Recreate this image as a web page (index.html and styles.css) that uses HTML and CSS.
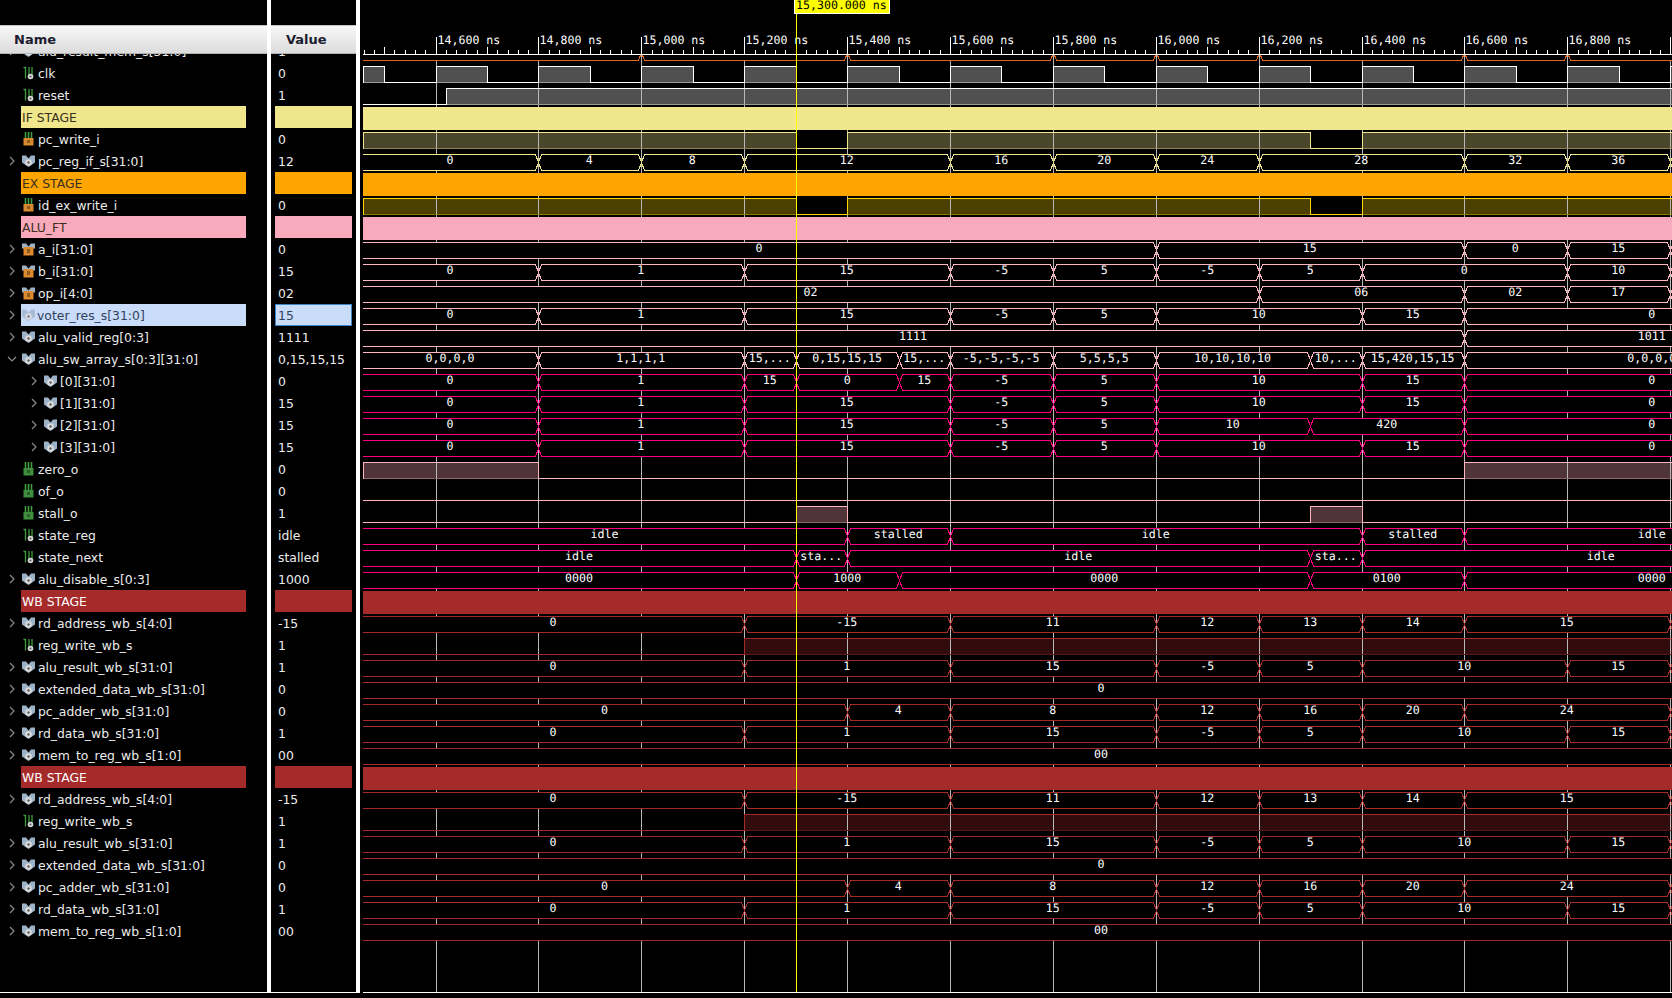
FILE: index.html
```html
<!DOCTYPE html>
<html lang="en">
<head>
    <meta charset="UTF-8" />
    <title>Waveform</title>
    <link rel="stylesheet" href="styles.css">
</head>
<body>
    <!-- icon set for the signal tree -->
    <svg class="icon-defs" width="0" height="0">
        <symbol id="ic-right" viewBox="0 0 6 10"><path d="M1 1l4 4-4 4" fill="none" stroke="#8a8a8a" stroke-width="1.2"/></symbol>
        <symbol id="ic-down" viewBox="0 0 10 6"><path d="M1 1l4 4 4-4" fill="none" stroke="#8a8a8a" stroke-width="1.2"/></symbol>
        <symbol id="ic-bit" viewBox="0 0 12 14">
            <path d="M1 1.5h2v11M6.5 1v8M9.5 1v8" fill="none" stroke="#3f9e3f" stroke-width="1.3"/>
            <circle cx="8" cy="10.5" r="2.8" fill="#d6d6d6"/><circle cx="8" cy="10.5" r="1" fill="#555"/>
        </symbol>
        <symbol id="ic-bit-in" viewBox="0 0 12 14">
            <path d="M3 0v7M6 0v7M9 0v7" fill="none" stroke="#3f9e3f" stroke-width="1.6"/>
            <rect x="1" y="6" width="10" height="7.5" fill="#d98a30"/><rect x="4.5" y="8" width="3" height="3" fill="#8a5c20"/>
        </symbol>
        <symbol id="ic-bit-out" viewBox="0 0 12 14">
            <path d="M3 0v7M6 0v7M9 0v7" fill="none" stroke="#3f9e3f" stroke-width="1.6"/>
            <rect x="1" y="6" width="10" height="7.5" fill="#3f8f3f"/><rect x="4.5" y="8" width="3" height="3" fill="#2a5f2a"/>
        </symbol>
        <symbol id="ic-bus" viewBox="0 0 13 14">
            <path d="M0 1.5h4l2.5 3 2.5-3h4v7l-6.5 4.5L0 8.500z" fill="#9db2c6"/>
            <circle cx="6.500" cy="8.500" r="3.300" fill="#dcdcdc"/><circle cx="6.500" cy="8.500" r="1.200" fill="#5a5a5a"/>
        </symbol>
        <symbol id="ic-bus-in" viewBox="0 0 13 14">
            <path d="M0 1.5h4l2.5 3 2.5-3h4v5H0z" fill="#9db2c6"/>
            <rect x="1.500" y="5" width="10" height="8.500" fill="#dd8a2e"/><rect x="5" y="7" width="3" height="4" fill="#8a5c20"/>
        </symbol>
    </svg>

    <div class="viewer">
        <div class="col col-name">
            <div class="col-head col-head-name">Name</div>
            <div class="rows rows-scrolled">
                <div class="row"><svg class="chev"><use href="#ic-right"/></svg><svg class="icon"><use href="#ic-bus"/></svg>alu_result_mem_s[31:0]</div>
                <div class="row no-chev"><svg class="icon"><use href="#ic-bit"/></svg>clk</div>
                <div class="row no-chev"><svg class="icon"><use href="#ic-bit"/></svg>reset</div>
                <div class="band-name band-if">IF STAGE</div>
                <div class="row no-chev"><svg class="icon"><use href="#ic-bit-in"/></svg>pc_write_i</div>
                <div class="row"><svg class="chev"><use href="#ic-right"/></svg><svg class="icon"><use href="#ic-bus"/></svg>pc_reg_if_s[31:0]</div>
                <div class="band-name band-ex">EX STAGE</div>
                <div class="row no-chev"><svg class="icon"><use href="#ic-bit-in"/></svg>id_ex_write_i</div>
                <div class="band-name band-alu">ALU_FT</div>
                <div class="row"><svg class="chev"><use href="#ic-right"/></svg><svg class="icon"><use href="#ic-bus-in"/></svg>a_i[31:0]</div>
                <div class="row"><svg class="chev"><use href="#ic-right"/></svg><svg class="icon"><use href="#ic-bus-in"/></svg>b_i[31:0]</div>
                <div class="row"><svg class="chev"><use href="#ic-right"/></svg><svg class="icon"><use href="#ic-bus-in"/></svg>op_i[4:0]</div>
                <div class="row row-selected"><svg class="chev"><use href="#ic-right"/></svg><span class="sel-fill"><svg class="icon"><use href="#ic-bus"/></svg>voter_res_s[31:0]</span></div>
                <div class="row"><svg class="chev"><use href="#ic-right"/></svg><svg class="icon"><use href="#ic-bus"/></svg>alu_valid_reg[0:3]</div>
                <div class="row"><svg class="chev chev-down"><use href="#ic-down"/></svg><svg class="icon"><use href="#ic-bus"/></svg>alu_sw_array_s[0:3][31:0]</div>
                <div class="row child"><svg class="chev"><use href="#ic-right"/></svg><svg class="icon"><use href="#ic-bus"/></svg>[0][31:0]</div>
                <div class="row child"><svg class="chev"><use href="#ic-right"/></svg><svg class="icon"><use href="#ic-bus"/></svg>[1][31:0]</div>
                <div class="row child"><svg class="chev"><use href="#ic-right"/></svg><svg class="icon"><use href="#ic-bus"/></svg>[2][31:0]</div>
                <div class="row child"><svg class="chev"><use href="#ic-right"/></svg><svg class="icon"><use href="#ic-bus"/></svg>[3][31:0]</div>
                <div class="row no-chev"><svg class="icon"><use href="#ic-bit-out"/></svg>zero_o</div>
                <div class="row no-chev"><svg class="icon"><use href="#ic-bit-out"/></svg>of_o</div>
                <div class="row no-chev"><svg class="icon"><use href="#ic-bit-out"/></svg>stall_o</div>
                <div class="row no-chev"><svg class="icon"><use href="#ic-bit"/></svg>state_reg</div>
                <div class="row no-chev"><svg class="icon"><use href="#ic-bit"/></svg>state_next</div>
                <div class="row"><svg class="chev"><use href="#ic-right"/></svg><svg class="icon"><use href="#ic-bus"/></svg>alu_disable_s[0:3]</div>
                <div class="band-name band-wb">WB STAGE</div>
                <div class="row"><svg class="chev"><use href="#ic-right"/></svg><svg class="icon"><use href="#ic-bus"/></svg>rd_address_wb_s[4:0]</div>
                <div class="row no-chev"><svg class="icon"><use href="#ic-bit"/></svg>reg_write_wb_s</div>
                <div class="row"><svg class="chev"><use href="#ic-right"/></svg><svg class="icon"><use href="#ic-bus"/></svg>alu_result_wb_s[31:0]</div>
                <div class="row"><svg class="chev"><use href="#ic-right"/></svg><svg class="icon"><use href="#ic-bus"/></svg>extended_data_wb_s[31:0]</div>
                <div class="row"><svg class="chev"><use href="#ic-right"/></svg><svg class="icon"><use href="#ic-bus"/></svg>pc_adder_wb_s[31:0]</div>
                <div class="row"><svg class="chev"><use href="#ic-right"/></svg><svg class="icon"><use href="#ic-bus"/></svg>rd_data_wb_s[31:0]</div>
                <div class="row"><svg class="chev"><use href="#ic-right"/></svg><svg class="icon"><use href="#ic-bus"/></svg>mem_to_reg_wb_s[1:0]</div>
                <div class="band-name band-wb">WB STAGE</div>
                <div class="row"><svg class="chev"><use href="#ic-right"/></svg><svg class="icon"><use href="#ic-bus"/></svg>rd_address_wb_s[4:0]</div>
                <div class="row no-chev"><svg class="icon"><use href="#ic-bit"/></svg>reg_write_wb_s</div>
                <div class="row"><svg class="chev"><use href="#ic-right"/></svg><svg class="icon"><use href="#ic-bus"/></svg>alu_result_wb_s[31:0]</div>
                <div class="row"><svg class="chev"><use href="#ic-right"/></svg><svg class="icon"><use href="#ic-bus"/></svg>extended_data_wb_s[31:0]</div>
                <div class="row"><svg class="chev"><use href="#ic-right"/></svg><svg class="icon"><use href="#ic-bus"/></svg>pc_adder_wb_s[31:0]</div>
                <div class="row"><svg class="chev"><use href="#ic-right"/></svg><svg class="icon"><use href="#ic-bus"/></svg>rd_data_wb_s[31:0]</div>
                <div class="row"><svg class="chev"><use href="#ic-right"/></svg><svg class="icon"><use href="#ic-bus"/></svg>mem_to_reg_wb_s[1:0]</div>
            </div>
        </div>

        <div class="col col-value">
            <div class="col-head col-head-value">Value</div>
            <div class="rows rows-scrolled">
                <div class="val">1</div>
                <div class="val">0</div>
                <div class="val">1</div>
                <div class="band-val band-if"></div>
                <div class="val">0</div>
                <div class="val">12</div>
                <div class="band-val band-ex"></div>
                <div class="val">0</div>
                <div class="band-val band-alu"></div>
                <div class="val">0</div>
                <div class="val">15</div>
                <div class="val">02</div>
                <div class="val val-selected">15</div>
                <div class="val">1111</div>
                <div class="val">0,15,15,15</div>
                <div class="val">0</div>
                <div class="val">15</div>
                <div class="val">15</div>
                <div class="val">15</div>
                <div class="val">0</div>
                <div class="val">0</div>
                <div class="val">1</div>
                <div class="val">idle</div>
                <div class="val">stalled</div>
                <div class="val">1000</div>
                <div class="band-val band-wb"></div>
                <div class="val">-15</div>
                <div class="val">1</div>
                <div class="val">1</div>
                <div class="val">0</div>
                <div class="val">0</div>
                <div class="val">1</div>
                <div class="val">00</div>
                <div class="band-val band-wb"></div>
                <div class="val">-15</div>
                <div class="val">1</div>
                <div class="val">1</div>
                <div class="val">0</div>
                <div class="val">0</div>
                <div class="val">1</div>
                <div class="val">00</div>
            </div>
        </div>

        <div class="col-wave">
            <svg id="waves" class="waves" width="1312" height="998" viewBox="360 0 1312 998"></svg>
        </div>
    </div>

    <script src="waves.js"></script>
</body>
</html>
```

FILE: styles.css
```css
/* Basic Styles */
body {
    margin: 0;
    background: #000;
    color: #ececec;
    font-family: "DejaVu Sans", sans-serif;
    font-size: 12.4px;
    overflow: hidden;
}

.icon-defs {
    display: block;
    height: 0;
}

.viewer {
    display: flex;
    width: 1672px;
    height: 998px;
    overflow: hidden;
    background: #000;
}

.col {
    display: flex;
    flex-direction: column;
    padding-top: 25px;
    height: 968px;
    border-right: 4px solid #fff;
}

.col-name {
    width: 267px;
    border-top: 0;
}

.col-value {
    width: 85px;
    position: relative;
}

/* second divider runs to the top of the window */
.col-value::after {
    content: "";
    position: absolute;
    top: 0;
    right: -4px;
    width: 4px;
    height: 25px;
    background: #fff;
}

.col-head {
    box-sizing: border-box;
    height: 29px;
    flex: none;
    border-top: 1px solid #c4c4c4;
    border-bottom: 1px solid #b4b4b4;
    background: linear-gradient(#f7f7f7, #dcdcdc);
    color: #1c1c30;
    font-weight: bold;
    font-size: 13px;
    line-height: 28px;
}

.col-head-name {
    padding-left: 14px;
}

.col-head-value {
    padding-left: 15px;
}

.rows {
    height: 938px;
    flex: none;
    overflow: hidden;
    border-bottom: 1px solid #fff;
}

/* the list is scrolled a little, first row sits half under the header */
.rows-scrolled > :first-child {
    margin-top: -14px;
}

.row {
    display: flex;
    align-items: center;
    height: 22px;
    padding-left: 9px;
    white-space: nowrap;
}

.row.no-chev {
    padding-left: 22px;
}

.row.child {
    padding-left: 31px;
}

.chev {
    width: 6px;
    height: 10px;
    margin-right: 7px;
    flex: none;
}

.chev-down {
    width: 10px;
    height: 6px;
    margin-left: -2px;
    margin-right: 5px;
}

.icon {
    width: 13px;
    height: 14px;
    margin-right: 3px;
    flex: none;
}

.row-selected .sel-fill {
    display: flex;
    align-items: center;
    width: 225px;
    height: 22px;
    margin-left: -1px;
    padding-left: 1px;
    box-sizing: border-box;
    background: #c9dcfa;
    color: #33415c;
}

.row-selected .icon {
    opacity: .75;
    margin-right: 2px;
}

.band-name {
    box-sizing: border-box;
    width: 225px;
    height: 22px;
    margin-left: 21px;
    padding: 1px 0 0 1px;
    line-height: 22px;
    color: #3a3020;
}

.band-val {
    height: 22px;
    margin: 0 4px;
}

.band-if { background: #f0e68c; }
.band-ex { background: #ffa500; }
.band-alu { background: #f8aabc; }
.band-wb { background: #a52a2a; color: #fff; }

.val {
    box-sizing: border-box;
    height: 22px;
    padding: 1px 0 0 7px;
    line-height: 22px;
}

.val-selected {
    margin: 0 4px;
    padding: 1px 0 0 2px;
    line-height: 19px;
    border: 1px solid #3a86c8;
    background: #c9dcfa;
    color: #33415c;
}

.col-wave {
    flex: 1;
    height: 998px;
    overflow: hidden;
}

.waves {
    display: block;
    shape-rendering: crispEdges;
}

.waves text {
    font-family: "DejaVu Sans Mono", monospace;
    font-size: 11.6px;
    fill: #fff;
    text-anchor: middle;
    text-rendering: geometricPrecision;
}

.waves .tick-label {
    text-anchor: start;
}

/* signal colours */
.c-orange { --line: #e0661e; --fill: #000; --dim: #000; }
.c-white { --line: #fff; --fill: #505050; --dim: #9a9a9a; }
.c-khaki { --line: #f0e68c; --fill: #4a462c; --dim: #8c8752; }
.c-gold { --line: #ffd700; --fill: #4c3f00; --dim: #8c7600; }
.c-pink { --line: #ffb6c1; --fill: #4f353a; --dim: #8f656d; }
.c-hot { --line: #ff0080; --fill: #4c0026; --dim: #8c0047; }
.c-brown { --line: #a52a2a; --fill: #320c0c; --dim: #5e1818; }

.bus-fill { fill: #000; }

.bus {
    fill: none;
    stroke: var(--line);
    stroke-width: 1;
}

.bit-fill { fill: var(--fill); }
.bit-line { fill: none; stroke: var(--line); stroke-width: 1; }
.bit-dim { fill: none; stroke: var(--dim); stroke-width: 1; }

.grid-line { stroke: #b8b8b8; stroke-width: 1; }
.ruler-line { stroke: #fff; stroke-width: 1; }
.bottom-line { stroke: #fff; stroke-width: 1; }
.ruler-mask { fill: #000; }

.cursor-line { stroke: #ff0; stroke-width: 1; }
.cursor-tag { fill: #ff0; stroke: #fff; stroke-width: 1; }
.waves .cursor-text { fill: #000; text-anchor: start; }
```

FILE: waves.js
```js
// builds the waveform canvas, page x = svg x thanks to the viewBox
const LEFT = 363, RIGHT = 1672, BOTTOM = 992;
const svg = document.getElementById("waves");
const NS = "http://www.w3.org/2000/svg";

const timeX = (t) => 435.6 + (t - 14600) * 0.5144;
const snap = (x) => Math.round(x) + 0.5;
const rowTop = (k) => 62 + 22 * k;

function add(parent, tag, attrs, text) {
    const el = document.createElementNS(NS, tag);
    for (const key in attrs) el.setAttribute(key, attrs[key]);
    if (text !== undefined) el.textContent = text;
    parent.appendChild(el);
    return el;
}

// layers: the grid goes over the fills but under buses and bands
const fills = add(svg, "g", {});
const grid = add(svg, "g", {});
const busFills = add(svg, "g", {});
const lines = add(svg, "g", {});
const bands = add(svg, "g", {});
const labels = add(svg, "g", {});

// segs: [label, end time] ... the last end is past the window on purpose
function bus(k, color, segs) {
    const g = add(lines, "g", { class: color });
    const y1 = rowTop(k) + 4.5, y2 = rowTop(k) + 20.5, mid = (y1 + y2) / 2;
    let start = LEFT;
    segs.forEach(([label, end], i) => {
        const xe = snap(timeX(end));
        const pts = [];
        if (i === 0) pts.push([start, y1]);
        else pts.push([start, mid], [start + 3, y1]);
        pts.push([xe - 3, y1], [xe, mid], [xe - 3, y2]);
        if (i === 0) pts.push([start, y2]);
        else pts.push([start + 3, y2]);
        add(busFills, "polygon", { class: "bus-fill", points: pts.join(" ") });
        // first segment is open on its left side, it runs out of the window
        add(g, i === 0 ? "polyline" : "polygon", { class: "bus", points: pts.join(" ") });
        if (label !== "") {
            add(labels, "text", { x: (start + xe) / 2 - 0.8, y: rowTop(k) + 14 }, label);
        }
        start = xe;
    });
}

// times: where the level toggles, first is the level at the window edge
function bit(k, color, level, times) {
    const f = add(fills, "g", { class: color });
    const g = add(lines, "g", { class: color });
    const y1 = rowTop(k) + 4.5, y2 = rowTop(k) + 20.5;
    const xs = [LEFT, ...times.map((t) => snap(timeX(t))), RIGHT];
    for (let i = 0; i < xs.length - 1; i++) {
        const high = (i % 2 === 0) === (level === 1);
        const a = xs[i], b = xs[i + 1];
        if (high) {
            add(f, "rect", { class: "bit-fill", x: a, y: y1, width: b - a, height: y2 - y1 });
            add(g, "path", { class: "bit-dim", d: `M${a} ${y2}H${b}` });
            add(g, "path", { class: "bit-line", d: `M${a} ${y2}V${y1}H${b}V${y2}` });
        } else {
            add(g, "path", { class: "bit-line", d: `M${a} ${y2}H${b}` });
        }
    }
}

function band(k, color) {
    add(bands, "rect", { x: LEFT, y: rowTop(k) + 1, width: RIGHT - LEFT, height: 23, fill: color });
}

// --- clock edges every 100 ns
const clkEdges = [];
for (let t = 14500; t <= 17000; t += 100) clkEdges.push(t);

const END = 17330;
const stalled = [15300, 15400, 16300, 16400];
const resultWb = [["0", 15200], ["1", 15600], ["15", 16000], ["-5", 16200], ["5", 16400], ["10", 16800], ["15", 17000], ["", END]];

bus(-1, "c-orange", [["", 15000], ["", 15400], ["", 15800], ["", 16000], ["", 16200], ["", 16600], ["", 16800], ["", END]]);
bit(0, "c-white", 1, clkEdges);
bit(1, "c-white", 0, [14620]);
band(2, "#f0e68c");
bit(3, "c-khaki", 1, stalled);
bus(4, "c-khaki", [["0", 14800], ["4", 15000], ["8", 15200], ["12", 15600], ["16", 15800], ["20", 16000], ["24", 16200], ["28", 16600], ["32", 16800], ["36", 17000], ["", END]]);
band(5, "#ffa500");
bit(6, "c-gold", 1, stalled);
band(7, "#f8aabc");
bus(8, "c-pink", [["0", 16000], ["15", 16600], ["0", 16800], ["15", 17000], ["", END]]);
bus(9, "c-pink", [["0", 14800], ["1", 15200], ["15", 15600], ["-5", 15800], ["5", 16000], ["-5", 16200], ["5", 16400], ["0", 16800], ["10", 17000], ["", END]]);
bus(10, "c-pink", [["02", 16200], ["06", 16600], ["02", 16800], ["17", 17000], ["", END]]);
bus(11, "c-pink", [["0", 14800], ["1", 15200], ["15", 15600], ["-5", 15800], ["5", 16000], ["10", 16400], ["15", 16600], ["0", END]]);
bus(12, "c-pink", [["1111", 16600], ["1011", END]]);
bus(13, "c-pink", [["0,0,0,0", 14800], ["1,1,1,1", 15200], ["15,...", 15300], ["0,15,15,15", 15500], ["15,...", 15600], ["-5,-5,-5,-5", 15800], ["5,5,5,5", 16000], ["10,10,10,10", 16300], ["10,...", 16400], ["15,420,15,15", 16600], ["0,0,0,0", END]]);
bus(14, "c-hot", [["0", 14800], ["1", 15200], ["15", 15300], ["0", 15500], ["15", 15600], ["-5", 15800], ["5", 16000], ["10", 16400], ["15", 16600], ["0", END]]);
const arr = [["0", 14800], ["1", 15200], ["15", 15600], ["-5", 15800], ["5", 16000], ["10", 16400], ["15", 16600], ["0", END]];
bus(15, "c-hot", arr);
bus(16, "c-hot", [["0", 14800], ["1", 15200], ["15", 15600], ["-5", 15800], ["5", 16000], ["10", 16300], ["420", 16600], ["0", END]]);
bus(17, "c-hot", arr);
bit(18, "c-pink", 1, [14800, 16600]);
bit(19, "c-pink", 0, []);
bit(20, "c-pink", 0, stalled);
bus(21, "c-hot", [["idle", 15400], ["stalled", 15600], ["idle", 16400], ["stalled", 16600], ["idle", END]]);
bus(22, "c-hot", [["idle", 15300], ["sta...", 15400], ["idle", 16300], ["sta...", 16400], ["idle", END]]);
bus(23, "c-hot", [["0000", 15300], ["1000", 15500], ["0000", 16300], ["0100", 16600], ["0000", END]]);

// the WB group shows up twice in the list
[24, 32].forEach((k) => {
    band(k, "#a52a2a");
    bus(k + 1, "c-brown", [["0", 15200], ["-15", 15600], ["11", 16000], ["12", 16200], ["13", 16400], ["14", 16600], ["15", 17000], ["", END]]);
    bit(k + 2, "c-brown", 0, [15200]);
    bus(k + 3, "c-brown", resultWb);
    bus(k + 4, "c-brown", [["0", END]]);
    bus(k + 5, "c-brown", [["0", 15400], ["4", 15600], ["8", 16000], ["12", 16200], ["16", 16400], ["20", 16600], ["24", 17000], ["", END]]);
    bus(k + 6, "c-brown", resultWb);
    bus(k + 7, "c-brown", [["00", END]]);
});

// grid and ruler
add(labels, "rect", { class: "ruler-mask", x: 360, y: 0, width: 1312, height: 54 });
for (let t = 14600; t <= 17000; t += 200) {
    const x = snap(timeX(t));
    add(grid, "line", { class: "grid-line", x1: x, x2: x, y1: 54, y2: BOTTOM });
    add(labels, "line", { class: "ruler-line", x1: x, x2: x, y1: 37, y2: 54 });
    add(labels, "text", { class: "tick-label", x: x + 1, y: 44 }, t.toLocaleString("en-US") + " ns");
}
for (let t = 14460; t <= 17000; t += 20) {
    if (t % 200 === 0) continue;
    const x = snap(timeX(t));
    add(labels, "line", { class: "ruler-line", x1: x, x2: x, y1: t % 100 === 0 ? 47 : 50, y2: 54 });
}
add(labels, "line", { class: "ruler-line", x1: LEFT, x2: RIGHT, y1: 54.5, y2: 54.5 });
add(labels, "line", { class: "bottom-line", x1: LEFT, x2: RIGHT, y1: BOTTOM + 0.5, y2: BOTTOM + 0.5 });

// main cursor
const cx = snap(timeX(15300));
add(labels, "line", { class: "cursor-line", x1: cx, x2: cx, y1: 14, y2: BOTTOM });
add(labels, "rect", { class: "cursor-tag", x: 794.5, y: -1, width: 95, height: 14.5 });
add(labels, "text", { class: "cursor-text", x: 796, y: 9 }, "15,300.000 ns");
```
